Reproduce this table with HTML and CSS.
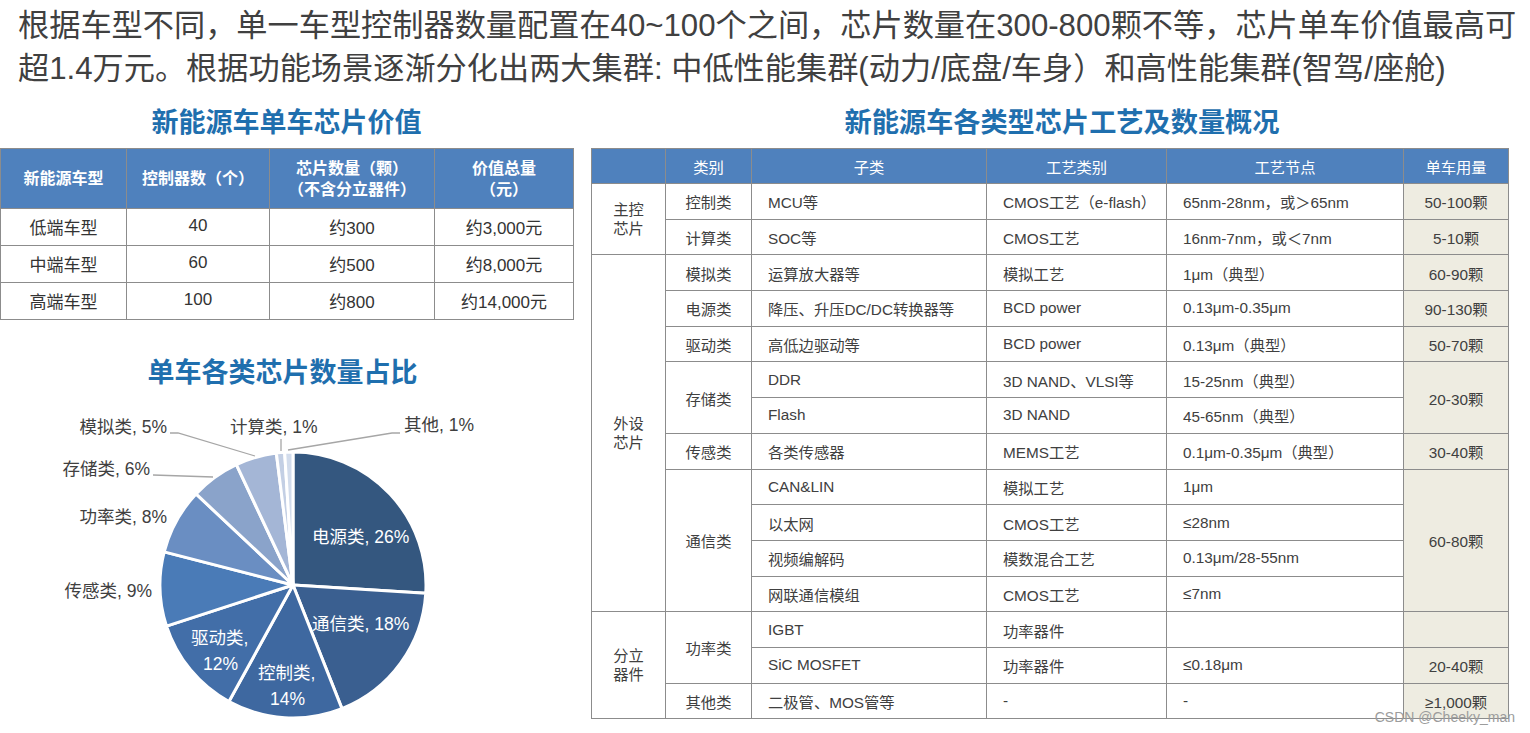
FILE: index.html
```html
<!DOCTYPE html>
<html lang="zh-CN">
<head>
<meta charset="utf-8">
<title>新能源车芯片</title>
<link rel="stylesheet" href="styles.css">
</head>
<body>
<div class="page">
  <p class="intro">根据车型不同，单一车型控制器数量配置在40~100个之间，芯片数量在300-800颗不等，芯片单车价值最高可<br>超1.4万元。根据功能场景逐渐分化出两大集群: 中低性能集群(动力/底盘/车身）和高性能集群(智驾/座舱)</p>
  <div class="main">
    <section class="left">
      <h2 class="title">新能源车单车芯片价值</h2>
      <table class="t1">
        <colgroup><col class="w1"><col class="w2"><col class="w3"><col class="w4"></colgroup>
        <thead>
          <tr><th>新能源车型</th><th>控制器数（个）</th><th>芯片数量（颗）<br>（不含分立器件）</th><th>价值总量<br>（元）</th></tr>
        </thead>
        <tbody>
          <tr><td>低端车型</td><td>40</td><td>约300</td><td>约3,000元</td></tr>
          <tr><td>中端车型</td><td>60</td><td>约500</td><td>约8,000元</td></tr>
          <tr><td>高端车型</td><td>100</td><td>约800</td><td>约14,000元</td></tr>
        </tbody>
      </table>
      <h2 class="title pie-title">单车各类芯片数量占比</h2>
      <svg class="pie" width="573" height="341" viewBox="0 0 573 341">
        <g class="slices">
          <path class="s1" d="M293 192 L293 59 A133 133 0 0 1 425.74 200.35 Z"/>
          <path class="s2" d="M293 192 L425.74 200.35 A133 133 0 0 1 341.96 315.66 Z"/>
          <path class="s3" d="M293 192 L341.96 315.66 A133 133 0 0 1 228.93 308.55 Z"/>
          <path class="s4" d="M293 192 L228.93 308.55 A133 133 0 0 1 166.51 233.10 Z"/>
          <path class="s5" d="M293 192 L166.51 233.10 A133 133 0 0 1 164.18 158.92 Z"/>
          <path class="s6" d="M293 192 L164.18 158.92 A133 133 0 0 1 196.05 100.95 Z"/>
          <path class="s7" d="M293 192 L196.05 100.95 A133 133 0 0 1 236.37 71.66 Z"/>
          <path class="s8" d="M293 192 L236.37 71.66 A133 133 0 0 1 276.33 60.05 Z"/>
          <path class="s9" d="M293 192 L276.33 60.05 A133 133 0 0 1 284.65 59.26 Z"/>
          <path class="s10" d="M293 192 L284.65 59.26 A133 133 0 0 1 293 59 Z"/>
        </g>
        <g class="leads">
          <polyline points="170,40 178,40 255,63"/>
          <polyline points="153,82 213,84"/>
          <polyline points="400,40 392,40 288,57"/>
          <polyline points="281,46 281,58"/>
        </g>
        <text class="in" x="312" y="150">电源类, 26%</text>
        <text class="in" x="312" y="237">通信类, 18%</text>
        <text class="in" x="191" y="251">驱动类,</text>
        <text class="in" x="203" y="277">12%</text>
        <text class="in" x="258" y="286">控制类,</text>
        <text class="in" x="270" y="312">14%</text>
        <text class="end" x="152" y="204">传感类, 9%</text>
        <text class="end" x="167" y="130">功率类, 8%</text>
        <text class="end" x="150" y="82">存储类, 6%</text>
        <text class="end" x="167" y="40">模拟类, 5%</text>
        <text x="230" y="40">计算类, 1%</text>
        <text x="404" y="38">其他, 1%</text>
      </svg>
    </section>
    <section class="right">
      <h2 class="title title-right">新能源车各类型芯片工艺及数量概况</h2>
      <table class="t2">
        <colgroup><col class="v1"><col class="v2"><col class="v3"><col class="v4"><col class="v5"><col class="v6"></colgroup>
        <thead>
          <tr><th></th><th>类别</th><th>子类</th><th>工艺类别</th><th>工艺节点</th><th>单车用量</th></tr>
        </thead>
        <tbody>
          <tr><td rowspan="2" class="grp">主控<br>芯片</td><td class="c">控制类</td><td>MCU等</td><td>CMOS工艺（e-flash）</td><td>65nm-28nm，或＞65nm</td><td class="qty">50-100颗</td></tr>
          <tr><td class="c">计算类</td><td>SOC等</td><td>CMOS工艺</td><td>16nm-7nm，或＜7nm</td><td class="qty">5-10颗</td></tr>
          <tr><td rowspan="10" class="grp">外设<br>芯片</td><td class="c">模拟类</td><td>运算放大器等</td><td>模拟工艺</td><td>1μm（典型）</td><td class="qty">60-90颗</td></tr>
          <tr><td class="c">电源类</td><td>降压、升压DC/DC转换器等</td><td>BCD power</td><td>0.13μm-0.35μm</td><td class="qty">90-130颗</td></tr>
          <tr><td class="c">驱动类</td><td>高低边驱动等</td><td>BCD power</td><td>0.13μm（典型）</td><td class="qty">50-70颗</td></tr>
          <tr><td rowspan="2" class="c">存储类</td><td>DDR</td><td>3D NAND、VLSI等</td><td>15-25nm（典型）</td><td rowspan="2" class="qty">20-30颗</td></tr>
          <tr><td>Flash</td><td>3D NAND</td><td>45-65nm（典型）</td></tr>
          <tr><td class="c">传感类</td><td>各类传感器</td><td>MEMS工艺</td><td>0.1μm-0.35μm（典型）</td><td class="qty">30-40颗</td></tr>
          <tr><td rowspan="4" class="c">通信类</td><td>CAN&amp;LIN</td><td>模拟工艺</td><td>1μm</td><td rowspan="4" class="qty">60-80颗</td></tr>
          <tr><td>以太网</td><td>CMOS工艺</td><td>≤28nm</td></tr>
          <tr><td>视频编解码</td><td>模数混合工艺</td><td>0.13μm/28-55nm</td></tr>
          <tr><td>网联通信模组</td><td>CMOS工艺</td><td>≤7nm</td></tr>
          <tr><td rowspan="3" class="grp">分立<br>器件</td><td rowspan="2" class="c">功率类</td><td>IGBT</td><td>功率器件</td><td></td><td class="qty"></td></tr>
          <tr><td>SiC MOSFET</td><td>功率器件</td><td>≤0.18μm</td><td class="qty">20-40颗</td></tr>
          <tr><td class="c">其他类</td><td>二极管、MOS管等</td><td>-</td><td>-</td><td class="qty">≥1,000颗</td></tr>
        </tbody>
      </table>
    </section>
  </div>
  <div class="watermark">CSDN @Cheeky_man</div>
</div>
</body>
</html>
```

FILE: styles.css
```css
* { box-sizing: border-box; }
html, body { margin: 0; padding: 0; background: #fff; }
body {
  font-family: "Liberation Sans", "Noto Sans CJK SC", sans-serif;
  color: #404040;
}
.page {
  position: relative;
  width: 1530px;
  height: 733px;
  overflow: hidden;
}
.intro {
  margin: 0;
  padding: 4px 0 0 18px;
  font-size: 31.2px;
  line-height: 43px;
  white-space: nowrap;
  color: #404040;
}
.main {
  display: flex;
  gap: 18px;
  align-items: flex-start;
}
.left { width: 573px; flex: none; }
.right { width: 917px; flex: none; }
.title {
  margin: 15px 0 7px;
  font-size: 27px;
  line-height: 36px;
  font-weight: bold;
  color: #1f6fae;
  text-align: center;
}
.title-right { padding-left: 25px; font-size: 27.2px; }
.pie-title { margin: 35px 0 2px; padding-right: 8px; }

table { border-collapse: collapse; table-layout: fixed; }

.t1 { width: 573px; font-size: 17px; color: #333; }
.t1 .w1 { width: 126px; }
.t1 .w2 { width: 143px; }
.t1 .w3 { width: 165px; }
.t1 .w4 { width: 139px; }
.t1 th, .t1 td {
  border: 1px solid #8c8c8c;
  text-align: center;
  padding: 0;
}
.t1 td { padding-bottom: 2px; }
.t1 th {
  background: #4f81bd;
  color: #fff;
  font-size: 16px;
  line-height: 21px;
  font-weight: bold;
}
.t1 thead tr { height: 60px; }
.t1 tbody tr { height: 37px; }

.pie { display: block; }
.pie .slices path { stroke: #fff; stroke-width: 3; stroke-linejoin: round; }
.pie .s1 { fill: #34577f; }
.pie .s2 { fill: #3a5f90; }
.pie .s3 { fill: #3e68a0; }
.pie .s4 { fill: #426ea8; }
.pie .s5 { fill: #4a7bb7; }
.pie .s6 { fill: #6a8ec2; }
.pie .s7 { fill: #8aa3ca; }
.pie .s8 { fill: #a4b6d6; }
.pie .s9 { fill: #c3cfe4; }
.pie .s10 { fill: #d2dcec; }
.pie .leads polyline { fill: none; stroke: #a6a6a6; stroke-width: 1.3; }
.pie text {
  font-family: "Liberation Sans", "Noto Sans CJK SC", sans-serif;
  font-size: 17.5px;
  fill: #404040;
}
.pie text.in { fill: #fff; }
.pie text.end { text-anchor: end; }

.t2 { width: 917px; font-size: 15.3px; color: #404040; }
.t2 .v1 { width: 74px; }
.t2 .v2 { width: 86px; }
.t2 .v3 { width: 235px; }
.t2 .v4 { width: 180px; }
.t2 .v5 { width: 237px; }
.t2 .v6 { width: 105px; }
.t2 th, .t2 td {
  border: 1px solid #8c8c8c;
  padding: 0 0 0 16px;
  text-align: left;
  white-space: nowrap;
}
.t2 th {
  background: #4f81bd;
  color: #fff;
  font-weight: normal;
  text-align: center;
  padding: 0;
}
.t2 thead tr { height: 35px; }
.t2 tbody tr { height: 35.7px; }
.t2 td.c { text-align: center; padding: 0; }
.t2 td.grp { text-align: center; padding: 0; line-height: 19px; }
.t2 td.qty { background: #eeece1; text-align: center; padding: 0; }

.watermark {
  position: absolute;
  right: 15px;
  bottom: 8px;
  font-family: "Liberation Sans", sans-serif;
  font-size: 14px;
  line-height: 16px;
  color: #9c9c9c;
}
```
